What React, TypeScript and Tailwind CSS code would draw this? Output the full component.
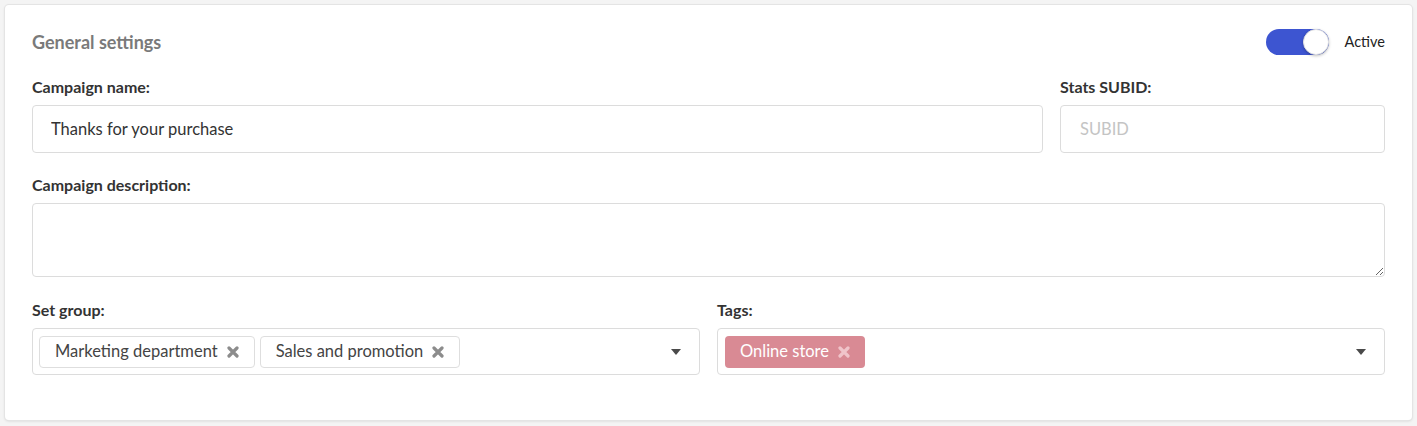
import { useState } from "react";

const Caret = () => (
  <svg width="10" height="6" viewBox="0 0 10 6" className="shrink-0">
    <path d="M0 0h10L5 6z" fill="#4a4a4a" />
  </svg>
);

const Cross = ({ color }: { color: string }) => (
  <svg width="12" height="12" viewBox="0 0 12 12" className="shrink-0">
    <path
      d="M2 2L10 10M10 2L2 10"
      stroke={color}
      strokeWidth="3.2"
      strokeLinecap="round"
    />
  </svg>
);

const Chip = ({ label }: { label: string }) => (
  <span className="flex h-8 items-center gap-[9px] rounded-[4px] border border-[#dedede] bg-white pl-[15px] pr-[15px] text-[16.5px] text-[#444]">
    {label}
    <Cross color="#8c8c8c" />
  </span>
);

const App = () => {
  const [active, setActive] = useState(true);

  return (
    <div
      className="min-h-[426px] bg-[#f4f4f4] p-[5px]"
      style={{ fontFamily: '"Lato", "Noto Sans", sans-serif' }}
    >
      <div className="rounded-[4px] bg-white px-[27px] pt-[22px] pb-[45px] shadow-[0_0_0_1px_#e4e4e4,0_1px_3px_rgba(0,0,0,0.15)]">
        {/* Header */}
        <div className="flex h-[30px] items-center justify-between">
          <h2 className="text-[18px] font-bold text-[#7a7a7a]">General settings</h2>
          <div className="flex items-center gap-4">
            <button
              type="button"
              onClick={() => setActive(!active)}
              className="relative h-[26px] w-[63px] rounded-full bg-[#3d55d1]"
            >
              <span className="absolute right-0 top-0 h-[26px] w-[26px] rounded-full border border-[#e2e2e2] bg-white shadow-[0_1px_3px_rgba(0,0,0,0.25)]" />
            </button>
            <span className="text-[14.5px] text-[#222]">Active</span>
          </div>
        </div>

        {/* Name + SUBID */}
        <div className="mt-[20px] flex gap-[17px]">
          <div className="flex flex-1 flex-col">
            <label className="text-[16px] font-bold leading-[20px] text-[#333]">
              Campaign name:
            </label>
            <input
              type="text"
              defaultValue="Thanks for your purchase"
              className="mt-[8px] h-[48px] rounded-[4px] border border-[#dcdcdc] px-[18px] text-[16.5px] text-[#333] outline-none"
            />
          </div>
          <div className="flex w-[325px] flex-col">
            <label className="text-[16px] font-bold leading-[20px] text-[#333]">
              Stats SUBID:
            </label>
            <input
              type="text"
              placeholder="SUBID"
              className="mt-[8px] h-[48px] rounded-[4px] border border-[#dcdcdc] px-[19px] text-[16.5px] text-[#333] outline-none placeholder:text-[#c4c4c4]"
            />
          </div>
        </div>

        {/* Description */}
        <div className="mt-[22px] flex flex-col">
          <label className="text-[16px] font-bold leading-[20px] text-[#333]">
            Campaign description:
          </label>
          <textarea className="mt-[8px] h-[74px] rounded-[4px] border border-[#dcdcdc] px-[18px] py-3 text-[16px] text-[#333] outline-none" />
        </div>

        {/* Group + Tags */}
        <div className="mt-[23px] flex gap-[17px]">
          <div className="flex flex-1 flex-col">
            <label className="text-[16px] font-bold leading-[20px] text-[#333]">
              Set group:
            </label>
            <div className="mt-[8px] flex h-[47px] items-center justify-between rounded-[4px] border border-[#dcdcdc] pl-[6px] pr-[18px]">
              <div className="flex gap-[5px]">
                <Chip label="Marketing department" />
                <Chip label="Sales and promotion" />
              </div>
              <Caret />
            </div>
          </div>
          <div className="flex flex-1 flex-col">
            <label className="text-[16px] font-bold leading-[20px] text-[#333]">
              Tags:
            </label>
            <div className="mt-[8px] flex h-[47px] items-center justify-between rounded-[4px] border border-[#dcdcdc] pl-[7px] pr-[18px]">
              <span className="flex h-8 items-center gap-[9px] rounded-[4px] bg-[#d98a94] pl-[15px] pr-[15px] text-[16.5px] text-white">
                Online store
                <Cross color="#f0c4ca" />
              </span>
              <Caret />
            </div>
          </div>
        </div>
      </div>
    </div>
  );
};

export default App;
